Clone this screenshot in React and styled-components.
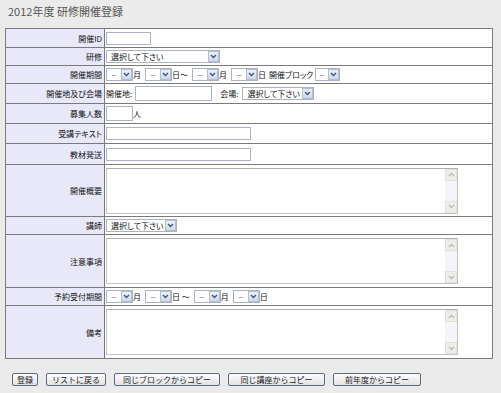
import React from 'react'
import styled, { createGlobalStyle } from 'styled-components'

const GlobalStyle = createGlobalStyle`
    html, body {
        margin: 0;
        padding: 0;
        background: #ebebeb;
    }
    body {
        font-family: "Noto Sans CJK JP", "Liberation Sans", sans-serif;
        font-feature-settings: "palt";
        color: #222;
    }
`

const Chevron = ({ up, color = '#3d5685' }) => (
    <svg width="7" height="5" viewBox="0 0 7 5">
        <path d={up ? 'M1 4 L3.5 1.5 L6 4' : 'M1 1 L3.5 3.5 L6 1'}
              fill="none" stroke={color} strokeWidth="1.4" />
    </svg>
)

const Select = ({ label, width = 27 }) => (
    <SelectBox $w={width}>
        {label ? <SelectText>{label}</SelectText> : <Dash>－</Dash>}
        <SelectArrow><Chevron /></SelectArrow>
    </SelectBox>
)

const TextBox = () => (
    <TextFrame>
        <TextArea />
        <ScrollBar>
            <ScrollBtn><Chevron up color="#bdbdb5" /></ScrollBtn>
            <ScrollBtn><Chevron color="#bdbdb5" /></ScrollBtn>
        </ScrollBar>
    </TextFrame>
)

const DateRange = ({ sep }) => (
    <>
        <Select /><Unit>月</Unit>
        <Select /><Unit>{sep}</Unit>
        <Select /><Unit>月</Unit>
        <Select /><Unit>日</Unit>
    </>
)

export default function App() {
    return (
        <Page>
            <GlobalStyle />
            <Title>2012年度 研修開催登録</Title>
            <Form>
                <Label>開催ID</Label>
                <Value><Input $w={45} /></Value>

                <Label>研修</Label>
                <Value><Select label="選択して下さい" width={114} /></Value>

                <Label>開催期間</Label>
                <Value>
                    <DateRange sep="日～" />
                    <Unit $gap={2} $left={-1}>開催ブロック</Unit>
                    <Select width={25} />
                </Value>

                <Label>開催地及び会場</Label>
                <Value>
                    <Unit $gap={3}>開催地:</Unit>
                    <Input $w={77} $h={15} />
                    <Unit $gap={4} $left={8}>会場:</Unit>
                    <Select label="選択して下さい" width={72} />
                </Value>

                <Label>募集人数</Label>
                <Value><Input $w={27} $h={15} /><Unit>人</Unit></Value>

                <Label>受講テキスト</Label>
                <Value><Input $w={145} /></Value>

                <Label>教材発送</Label>
                <Value><Input $w={145} /></Value>

                <Label>開催概要</Label>
                <Value><TextBox /></Value>

                <Label>講師</Label>
                <Value><Select label="選択して下さい" width={71} /></Value>

                <Label>注意事項</Label>
                <Value><TextBox /></Value>

                <Label>予約受付期間</Label>
                <Value><DateRange sep="日 ～" /></Value>

                <Label>備考</Label>
                <Value><TextBox /></Value>
            </Form>
            <Buttons>
                <Button $w={26}>登録</Button>
                <Button $w={60}>リストに戻る</Button>
                <Button $w={106}>同じブロックからコピー</Button>
                <Button $w={97}>同じ講座からコピー</Button>
                <Button $w={88}>前年度からコピー</Button>
            </Buttons>
        </Page>
    )
}

const Page = styled.div`
    width: 501px;
    height: 393px;
    padding-left: 5px;
    box-sizing: border-box;
`

const Title = styled.h1`
    margin: 0;
    height: 28px;
    padding: 4px 0 0 3px;
    box-sizing: border-box;
    font-size: 11px;
    line-height: 14px;
    font-weight: normal;
    color: #555;
`

const Form = styled.div`
    display: grid;
    grid-template-columns: 98px 1fr;
    grid-template-rows: 18px 17px 17px 19px 19px 19px 20px 51px 17px 52px 17px 52px;
    gap: 1px;
    width: 488px;
    box-sizing: border-box;
    border: 1px solid #7a7a7a;
    background: #7a7a7a;
`

const Label = styled.div`
    display: flex;
    align-items: center;
    justify-content: flex-end;
    padding-right: 2px;
    background: #e8e8f8;
    font-size: 8px;
    color: #111;
    white-space: nowrap;
`

const Value = styled.div`
    display: flex;
    align-items: center;
    padding-left: 1px;
    background: #fff;
    font-size: 8px;
    color: #111;
    white-space: nowrap;
`

const Input = styled.div`
    width: ${p => p.$w}px;
    height: ${p => p.$h || 13}px;
    box-sizing: border-box;
    border: 1px solid #aab3bf;
    background: #fff;
`

const Unit = styled.span`
    margin-left: ${p => p.$left || 0}px;
    margin-right: ${p => p.$gap ?? 4}px;
    font-size: 8px;
    line-height: 10px;
`

const SelectBox = styled.div`
    display: flex;
    width: ${p => p.$w}px;
    height: 13px;
    box-sizing: border-box;
    border: 1px solid #aab3bf;
    background: #fff;
`

const SelectText = styled.span`
    flex: 1;
    padding-left: 4px;
    font-size: 8px;
    line-height: 11px;
    overflow: hidden;
`

const Dash = styled.span`
    flex: 1;
    text-align: center;
    font-size: 6px;
    line-height: 11px;
    color: #333;
`

const SelectArrow = styled.span`
    display: flex;
    align-items: center;
    justify-content: center;
    width: 11px;
    box-sizing: border-box;
    border: 1px solid #b3bfd0;
    background: linear-gradient(#eef2f8, #cfd8e6);
`

const TextFrame = styled.div`
    display: flex;
    width: 352px;
    height: 46px;
    box-sizing: border-box;
    border: 1px solid #c4c4c4;
    border-top-color: #b0b0b0;
    background: #fff;
`

const TextArea = styled.div`
    flex: 1;
`

const ScrollBar = styled.div`
    display: flex;
    flex-direction: column;
    justify-content: space-between;
    width: 12px;
    background: #f4f4fb;
`

const ScrollBtn = styled.div`
    display: flex;
    align-items: center;
    justify-content: center;
    height: 12px;
    box-sizing: border-box;
    border: 1px solid #e2e2da;
    background: #ededea;
`

const Buttons = styled.div`
    display: flex;
    gap: 8px;
    margin-top: 14px;
    padding-left: 7px;
`

const Button = styled.button`
    width: ${p => p.$w}px;
    height: 13px;
    padding: 0;
    box-sizing: border-box;
    border: 1px solid #5c6b7e;
    border-radius: 2px;
    background: linear-gradient(#fdfdfd, #e2e2e2);
    font-family: inherit;
    font-size: 8px;
    line-height: 11px;
    color: #222;
`
